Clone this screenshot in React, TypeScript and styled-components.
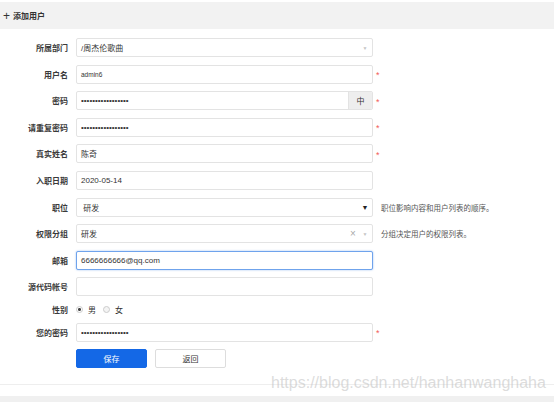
import React from 'react';
import styled, {createGlobalStyle} from 'styled-components';

const Global = createGlobalStyle`
body{
    margin:0;
    background:#fff;
    font-family:"Liberation Sans","Noto Sans CJK SC",sans-serif;
    color:#333;
}
`
const Page = styled.div`
position:relative;
width:554px;
height:402px;
overflow:hidden;
background:#fff;
`
//header band
const Header = styled.div`
margin-top:2px;
height:27px;
background:#f2f2f2;
display:flex;
align-items:center;
padding-left:3px;
font-size:8px;
font-weight:bold;
color:#333;
span{
    font-size:12px;
    font-weight:normal;
    margin-right:3px;
    line-height:1;
}
`
const Form = styled.div`
display:flex;
flex-direction:column;
gap:7.6px;
padding-top:9px;
`
const Row = styled.div<{ $h?: number }>`
display:flex;
align-items:center;
height:${p => p.$h ?? 19}px;
`
const Label = styled.div`
width:68px;
margin-right:8px;
text-align:right;
font-size:8px;
font-weight:600;
color:#3a3a3a;
`
const Box = styled.div<{ $focus?: boolean }>`
box-sizing:border-box;
width:297px;
height:19px;
border:1px solid ${p => p.$focus ? '#6fa3ec' : '#e3e3e3'};
box-shadow:${p => p.$focus ? '0 0 2px rgba(80,140,230,.6)' : 'none'};
border-radius:2px;
display:flex;
align-items:center;
padding-left:4px;
font-size:8px;
color:#333;
background:#fff;
overflow:hidden;
`
const Val = styled.div<{ $size?: number }>`
flex:1;
font-size:${p => p.$size ?? 8}px;
`
const Dots = styled.input`
flex:1;
border:none;
outline:none;
padding:0;
font-size:8px;
font-family:inherit;
background:transparent;
color:#333;
`
const Caret = styled.div<{ $dark?: boolean }>`
width:14px;
text-align:center;
font-size:${p => p.$dark ? 7 : 5}px;
color:${p => p.$dark ? '#222' : '#c4c4c4'};
`
const Clear = styled.div`
width:10px;
text-align:center;
font-size:10px;
line-height:1;
color:#aaa;
`
const Addon = styled.div`
width:23px;
align-self:stretch;
background:#eee;
border-left:1px solid #e3e3e3;
display:flex;
align-items:center;
justify-content:center;
font-size:8px;
color:#333;
`
const Star = styled.div`
margin-left:3px;
color:#f25a5a;
font-size:9px;
line-height:1;
padding-top:3px;
`
const Hint = styled.div`
margin-left:8px;
font-size:7.5px;
color:#555;
`
const Radios = styled.div`
display:flex;
align-items:center;
font-size:8px;
`
const Radio = styled.span<{ $on?: boolean }>`
box-sizing:border-box;
width:7px;
height:7px;
border-radius:50%;
border:1px solid #ccc;
background:${p => p.$on ? 'radial-gradient(circle,#444 0 1.3px,#fff 1.6px)' : '#f4f4f4'};
margin-right:5px;
`
const RadioText = styled.span`
margin-right:7px;
`
const Buttons = styled.div`
display:flex;
gap:8px;
margin-left:76px;
`
const Btn = styled.div<{ $primary?: boolean }>`
box-sizing:border-box;
width:71px;
height:19px;
border-radius:2px;
display:flex;
align-items:center;
justify-content:center;
font-size:8px;
background:${p => p.$primary ? '#1468e6' : '#fff'};
color:${p => p.$primary ? '#fff' : '#333'};
border:1px solid ${p => p.$primary ? '#1468e6' : '#ddd'};
`
const Divider = styled.div`
margin-top:16px;
height:1px;
background:#eee;
`
const Footer = styled.div`
margin-top:11px;
height:10px;
background:#f0f0f0;
`
const Watermark = styled.div`
position:absolute;
left:271px;
top:374px;
font-size:16px;
font-family:"Liberation Sans",sans-serif;
color:rgba(190,190,190,.55);
white-space:nowrap;
`

const pwd = '12345678901234567';

export default function App() {
    return (
        <Page>
            <Global/>
            <Header><span>+</span>添加用户</Header>
            <Form>
                <Row>
                    <Label>所属部门</Label>
                    <Box><Val>/周杰伦歌曲</Val><Caret>▼</Caret></Box>
                </Row>
                <Row>
                    <Label>用户名</Label>
                    <Box><Val $size={6.5}>admin6</Val></Box>
                    <Star>*</Star>
                </Row>
                <Row>
                    <Label>密码</Label>
                    <Box><Dots type="password" value={pwd} readOnly/><Addon>中</Addon></Box>
                    <Star>*</Star>
                </Row>
                <Row>
                    <Label>请重复密码</Label>
                    <Box><Dots type="password" value={pwd} readOnly/></Box>
                    <Star>*</Star>
                </Row>
                <Row>
                    <Label>真实姓名</Label>
                    <Box><Val>陈奇</Val></Box>
                    <Star>*</Star>
                </Row>
                <Row>
                    <Label>入职日期</Label>
                    <Box><Val>2020-05-14</Val></Box>
                </Row>
                <Row>
                    <Label>职位</Label>
                    <Box><Val>&nbsp;研发</Val><Caret $dark>▼</Caret></Box>
                    <Hint>职位影响内容和用户列表的顺序。</Hint>
                </Row>
                <Row>
                    <Label>权限分组</Label>
                    <Box><Val>研发</Val><Clear>×</Clear><Caret>▼</Caret></Box>
                    <Hint>分组决定用户的权限列表。</Hint>
                </Row>
                <Row>
                    <Label>邮箱</Label>
                    <Box $focus><Val>6666666666@qq.com</Val></Box>
                </Row>
                <Row>
                    <Label>源代码帐号</Label>
                    <Box/>
                </Row>
                <Row $h={11}>
                    <Label>性别</Label>
                    <Radios>
                        <Radio $on/><RadioText>男</RadioText>
                        <Radio/><RadioText>女</RadioText>
                    </Radios>
                </Row>
                <Row>
                    <Label>您的密码</Label>
                    <Box><Dots type="password" value={pwd} readOnly/></Box>
                    <Star>*</Star>
                </Row>
                <Buttons>
                    <Btn $primary>保存</Btn>
                    <Btn>返回</Btn>
                </Buttons>
            </Form>
            <Divider/>
            <Footer/>
            <Watermark>https://blog.csdn.net/hanhanwanghaha</Watermark>
        </Page>
    );
}
